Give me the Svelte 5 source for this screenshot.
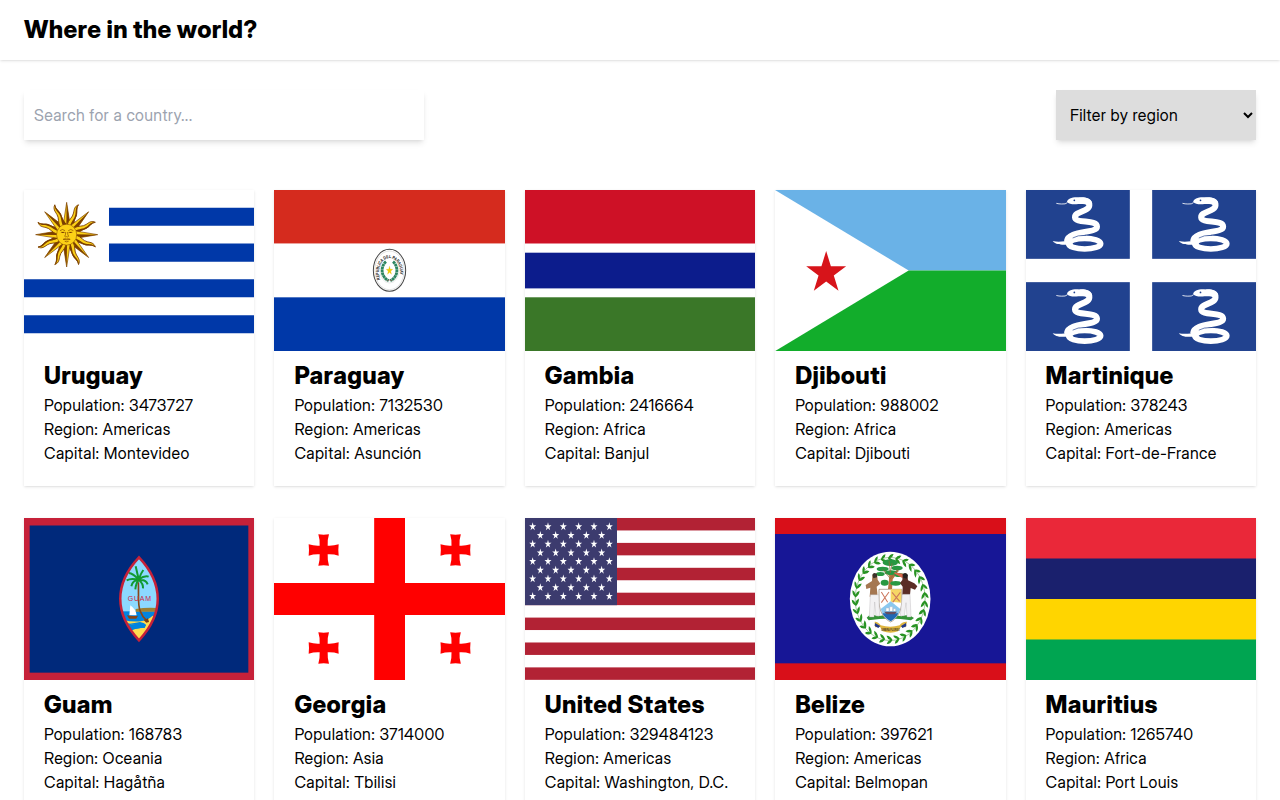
<script>
  const countries = [
    { name: 'Uruguay', population: 3473727, region: 'Americas', capital: 'Montevideo', box: '12 12 691.2 483.84' },
    { name: 'Paraguay', population: 7132530, region: 'Americas', capital: 'Asunción', box: '-228 -135 691.2 483.84' },
    { name: 'Gambia', population: 2416664, region: 'Africa', capital: 'Banjul', box: '0 0 230.4 161.28' },
    { name: 'Djibouti', population: 988002, region: 'Africa', capital: 'Djibouti', box: '15 12 691.2 483.84' },
    { name: 'Martinique', population: 378243, region: 'Americas', capital: 'Fort-de-France', box: '18 12 691.2 483.84' },
    { name: 'Guam', population: 168783, region: 'Oceania', capital: 'Hagåtña', box: '12 12 691.2 483.84' },
    { name: 'Georgia', population: 3714000, region: 'Asia', capital: 'Tbilisi', box: '12 12 691.2 483.84' },
    { name: 'United States', population: 329484123, region: 'Americas', capital: 'Washington, D.C.', box: '15 12 691.2 483.84' },
    { name: 'Belize', population: 397621, region: 'Americas', capital: 'Belmopan', box: '-195 -66 691.2 483.84' },
    { name: 'Mauritius', population: 1265740, region: 'Africa', capital: 'Port Louis', box: '0 0 230.4 161.28' }
  ];

  const regions = ['Africa', 'Americas', 'Asia', 'Europe', 'Oceania'];

  function star(cx, cy, rx, ry = rx) {
    return Array.from({ length: 10 }, (_, i) => {
      const k = i % 2 ? 0.382 : 1;
      const a = (i * Math.PI) / 5;
      return `${(cx + rx * k * Math.sin(a)).toFixed(2)},${(cy - ry * k * Math.cos(a)).toFixed(2)}`;
    }).join(' ');
  }

  const unionStars = [];
  for (let row = 0; row < 9; row++) {
    const n = row % 2 ? 5 : 6;
    for (let i = 0; i < n; i++) {
      unionStars.push(star((row % 2 ? 61 : 38) + i * 46, 38 + row * 26.1, 11, 13));
    }
  }

  const rays = Array.from({ length: 8 }, (_, i) => i * 45);
  const wreath = Array.from({ length: 30 }, (_, i) => i * 12);
</script>

<header>
  <h1>Where in the world?</h1>
</header>

<main>
  <div class="controls">
    <input type="text" placeholder="Search for a country..." />
    <select>
      <option>Filter by region</option>
      {#each regions as region}
        <option>{region}</option>
      {/each}
    </select>
  </div>

  <div class="grid">
    {#each countries as c}
      <article class="card">
        <svg class="flag" viewBox={c.box} preserveAspectRatio="none">
          {#if c.name === 'Uruguay'}
            <rect x="0" y="0" width="720" height="510" fill="#fff" />
            <path fill="#0038a8" d="M267 65.5h450v54h-450zM267 172.5h450v54.500h-450zM0 280h720v54H0zM0 387.500h720v54H0z" />
            <g transform="translate(140 146) scale(.96 1)">
              {#each rays as a}
                <g transform="rotate({a})">
                  <path d="M-11 -28L0 -97L11 -28Z" fill="#fcd116" stroke="#7b3f00" stroke-width="2" />
                  <path d="M-1 -28L0 -97L11 -28Z" fill="#7b3f00" />
                </g>
                <g transform="rotate({a + 22.5})">
                  <path d="M-10 -28C-12 -45 -2 -55 -5 -68C-7 -79 -10 -88 0 -97C-4 -83 6 -75 6 -63C6 -52 4 -44 11 -28Z" fill="#fcd116" stroke="#7b3f00" stroke-width="2.500" />
                  <path d="M0 -28C-2 -45 5 -52 2 -66C0 -77 -7 -84 0 -97C-2 -83 7 -75 7 -63C7 -52 6 -44 12 -28Z" fill="#7b3f00" />
                </g>
              {/each}
              <circle r="31.5" fill="#fcd116" stroke="#7b3f00" stroke-width="1.500" />
              <g fill="none" stroke="#7b3f00" stroke-width="2">
                <path d="M-21 -12Q-13 -19 -5 -12M5 -12Q13 -19 21 -12M-18 -7h12M6 -7h12M-3 -8Q-3 1 -6 5Q-3 8 0 6Q3 8 6 5Q3 1 3 -8M-11 14Q-5 11 0 13Q5 11 11 14Q0 17 -11 14M-6 20Q0 23 6 20" />
              </g>
              <path d="M-15 -8h6v3h-6zM9 -8h6v3h-6z" fill="#7b3f00" />
            </g>
          {:else if c.name === 'Paraguay'}
            <rect x="-230" y="-135" width="700" height="161" fill="#d52b1e" />
            <rect x="-230" y="26" width="700" height="161" fill="#fff" />
            <rect x="-230" y="187" width="700" height="164" fill="#0038a8" />
            <ellipse cx="118.500" cy="106" rx="48.500" ry="63" fill="#fff" stroke="#444" stroke-width="3" />
            <ellipse cx="118.500" cy="106" rx="44" ry="58" fill="none" stroke="#aaa" stroke-width="1" />
            <ellipse cx="118.500" cy="106" rx="29" ry="38" fill="none" stroke="#bbb" stroke-width="1" />
            <path id="seal-ring" d="M91 133A32 42 0 1 1 146 133" fill="none" />
            <text font-family="Liberation Sans" font-weight="700" font-size="13" fill="#111">
              <textPath href="#seal-ring" textLength="146" lengthAdjust="spacingAndGlyphs">REPUBLICA DEL PARAGUAY</textPath>
            </text>
            <path d="M108 80C90 95 93 127 116 137M129 80C147 95 144 127 121 137" fill="none" stroke="#2c8560" stroke-width="8.500" stroke-dasharray="8 1" />
            <path d="M110 137Q118 133 127 137" fill="none" stroke="#8a5e55" stroke-width="2" />
            <polygon points={star(118.5, 107, 10, 13)} fill="#f5d000" stroke="#d5ab00" stroke-width=".8" />
          {:else if c.name === 'Gambia'}
            <rect width="231" height="162" fill="#fff" />
            <rect width="231" height="53.500" fill="#ce1126" />
            <rect y="62.700" width="231" height="35.700" fill="#0c1c8c" />
            <rect y="107.300" width="231" height="54.700" fill="#3a7728" />
          {:else if c.name === 'Djibouti'}
            <rect x="0" y="0" width="720" height="253.500" fill="#6ab2e7" />
            <rect x="0" y="253.500" width="720" height="250" fill="#12ad2b" />
            <path d="M15 12L416 253.500L15 495.500Z" fill="#fff" />
            <polygon points={star(168.5, 261, 63, 66)} fill="#d7141a" />
          {:else if c.name === 'Martinique'}
            <rect x="0" y="0" width="720" height="510" fill="#fff" />
            {#each [[0, 0], [378.5, 0], [0, 276.5], [378.5, 276.5]] as [x, y]}
              <g transform="translate({x} {y})">
                <rect x={x ? 18 : 0} y="12" width={x ? 320 : 329.5} height="206.500" fill="#21428f" />
                <path d="M178 44C200 41 209 46 208 58C207 77 164 76 165 94C166 114 231 99 231 122C231 143 145 132 141 165" fill="none" stroke="#fff" stroke-width="18" />
                <path d="M141 48C142 38 158 32 178 34C193 32 209 36 216 49L205 60C197 53 187 54 175 54C162 56 147 55 141 48Z" fill="#fff" />
                <path d="M142 50Q137 55 125 54Q117 54 109 52" fill="none" stroke="#fff" stroke-width="2.500" />
                <circle cx="163" cy="43" r="2.600" fill="#21428f" />
                <ellipse cx="194" cy="173" rx="48" ry="16" fill="none" stroke="#fff" stroke-width="17" />
                <path d="M98 165C110 168 122 167 133 166C135 153 143 145 155 140L164 151L155 166L160 176Q148 183 138 176C122 176 109 177 98 165Z" fill="#fff" />
                <path d="M158 156Q172 147 198 148" fill="none" stroke="#21428f" stroke-width="2" />
              </g>
            {/each}
          {:else if c.name === 'Guam'}
            <rect x="0" y="0" width="720" height="510" fill="#c62139" />
            <rect x="29" y="34.500" width="656" height="441.500" fill="#00297b" />
            <clipPath id="seal-guam"><path d="M357 130C432 210 432 299 357 379C282 299 282 210 357 130Z" /></clipPath>
            <g clip-path="url(#seal-guam)">
              <rect x="295" y="125" width="125" height="170" fill="#8cd9ff" />
              <rect x="295" y="292" width="125" height="90" fill="#0084e0" />
              <path d="M347 285Q380 279 415 282V293H347Z" fill="#9c8032" />
              <path d="M305 317Q340 325 362 322Q387 317 398 305L420 310V390H320L332 351Q350 340 374 342Q380 332 358 328Q340 333 328 329Z" fill="#ffdc50" />
              <path d="M323 330Q345 327 360 324Q386 330 375 339Q354 344 336 346L325 342Q354 338 350 333Z" fill="#0084e0" />
              <path d="M355 205C357 244 352 273 361 292Q368 310 380 320" fill="none" stroke="#874719" stroke-width="5" />
              <path d="M371 318L384 313L387 324L379 326Z" fill="#7b3c16" />
              <g fill="none" stroke="#119a32" stroke-width="6">
                <path d="M356 196Q350 170 347 157M356 196Q363 177 370 168M355 196Q339 178 326 177M356 196Q374 184 386 188M356 198Q334 191 320 199M356 199Q377 195 383 211M354 199Q338 199 334 217M356 198Q348 207 346 226M357 198Q370 209 369 223" />
              </g>
              <path d="M331 274L328 304H350Q348 286 331 274Z" fill="#fff" />
              <path d="M321 304Q337 308 354 305L349 314H327Z" fill="#894415" />
            </g>
            <text x="323" y="262" font-family="Liberation Sans" font-size="21" textLength="70" lengthAdjust="spacing" fill="#cf2442">GUAM</text>
            <path d="M357 130C432 210 432 299 357 379C282 299 282 210 357 130Z" fill="none" stroke="#c62139" stroke-width="7.500" />
          {:else if c.name === 'Georgia'}
            <rect x="0" y="0" width="720" height="510" fill="#fff" />
            <path d="M312.500 0h92.500v510h-92.500zM0 207h720v96H0z" fill="#f00" />
            {#each [[161, 108], [556.5, 108], [161, 402], [556.5, 402]] as [x, y]}
              <path transform="translate({x} {y})" d="M-16 -47Q0 -45 16 -47Q11 -31 12 -13Q29 -12 45 -17Q43 0 45 17Q29 12 12 13Q11 31 16 47Q0 45 -16 47Q-11 31 -12 13Q-29 12 -45 17Q-43 0 -45 -17Q-29 -12 -12 -13Q-11 -31 -16 -47Z" fill="#f00" />
            {/each}
          {:else if c.name === 'United States'}
            <rect x="0" y="0" width="720" height="510" fill="#fff" />
            {#each [0, 2, 4, 6, 8, 10, 12] as i}
              <rect x="0" y={12 + i * 37.35} width="720" height="37.350" fill="#b22234" />
            {/each}
            <rect x="0" y="0" width="291" height="273.500" fill="#3c3b6e" />
            {#each unionStars as points}
              <polygon {points} fill="#fff" />
            {/each}
          {:else if c.name === 'Belize'}
            <rect x="-200" y="-70" width="720" height="500" fill="#d90f19" />
            <rect x="-200" y="-18" width="720" height="388" fill="#171696" />
            <ellipse cx="150.500" cy="177" rx="121" ry="142" fill="#fff" />
            <ellipse cx="150.500" cy="177" rx="105" ry="125" fill="none" stroke="#4b9b3c" stroke-width="1.500" />
            <g transform="translate(150.500 177) scale(.85 1)">
              {#each wreath as a}
                <path transform="rotate({a}) translate(0 -123)" d="M-8 1Q-1 -13 12 -12Q10 -3 0 0Q9 2 13 13Q1 14 -8 1Z" fill="#289323" />
              {/each}
            </g>
            <path d="M80 233Q88 220 114 229Q150 219 184 229Q207 220 222 234L213 241Q150 230 86 241Z" fill="#359437" />
            <path d="M147 147L151 107L137 93M153 148L156 106L175 91M153 120L165 103" fill="none" stroke="#b57440" stroke-width="6" />
            <g fill="#289842">
              <ellipse cx="151" cy="68" rx="23" ry="10" />
              <ellipse cx="128" cy="87" rx="18" ry="7" />
              <ellipse cx="171" cy="84" rx="17" ry="7" />
              <ellipse cx="121" cy="102" rx="13" ry="6" />
              <ellipse cx="153" cy="98" rx="19" ry="7" />
              <ellipse cx="177" cy="105" rx="14" ry="6" />
              <ellipse cx="134" cy="128" rx="12" ry="9" />
              <ellipse cx="167" cy="130" rx="16" ry="7" />
            </g>
            <path d="M147 62L151 99L156 70M128 88L151 116L173 88" stroke="#91683a" stroke-width="2" fill="none" />
            <path d="M163 97L196 103L187 114L164 101" fill="#db674c" />
            <path d="M117 148H185V187C185 216 168 238 152 246C132 237 119 216 117 188Z" fill="#fff" stroke="#907b68" stroke-width="2" />
            <path d="M152 148H184V188L152 185Z" fill="#f6d665" />
            <path d="M152 184L122 207Q130 232 152 244Q173 232 181 207Z" fill="#8bc8ef" />
            <path d="M127 220H175Q168 235 152 244Q135 235 127 220Z" fill="#2168b4" />
            <path d="M132 215H171L164 223H140Z" fill="#664d60" />
            <path d="M138 213V204H147V213M149 213V200H158V213M160 213V206H167V213" fill="#fff" stroke="#aab9cc" stroke-width="1.500" />
            <path d="M124 156L143 187M147 156L124 188M156 157L179 184M181 157L158 187" stroke="#cb765d" stroke-width="3" />
            <g>
              <path d="M97 106L111 103L113 119L121 131L110 140L112 158L112 170H89L91 143L79 147L77 135L96 123Z" fill="#a57751" />
              <path d="M97 104Q101 95 111 102V112L100 115Z" fill="#3d3028" />
              <path d="M91 164H116L119 228H108L104 186L102 231H88Z" fill="#f2f1f3" stroke="#aaa6a9" />
              <path d="M188 103L202 105L204 121L223 130L232 139L225 149L212 144L210 165H187L188 140L180 129L187 120Z" fill="#5b2d26" />
              <path d="M188 102Q198 95 204 105L201 116L190 113Z" fill="#28201f" />
              <path d="M187 163H210L213 231H201L198 188L193 227H181Z" fill="#f2f1f3" stroke="#aaa6a9" />
            </g>
            <path d="M104 245Q114 244 122 256Q151 264 179 256Q186 244 201 245L197 262L183 260L174 274Q152 282 128 274L120 260L105 262Z" fill="#dfb640" />
            <path d="M105 249L121 258L115 264L104 258ZM198 249L183 258L187 264L199 259Z" fill="#253988" />
            <text x="124" y="272" font-family="Liberation Sans" font-size="10" font-weight="700" textLength="55" lengthAdjust="spacingAndGlyphs" fill="#493925">UMBRA FLOREO</text>
          {:else}
            <rect width="231" height="41" fill="#ea2839" />
            <rect y="40.500" width="231" height="41" fill="#1a206d" />
            <rect y="81" width="231" height="41" fill="#ffd500" />
            <rect y="121.500" width="231" height="41" fill="#00a551" />
          {/if}
        </svg>
        <div class="info">
          <h2>{c.name}</h2>
          <p>Population: {c.population}</p>
          <p>Region: {c.region}</p>
          <p>Capital: {c.capital}</p>
        </div>
      </article>
    {/each}
  </div>
</main>

<style>
  :global(body) {
    margin: 0;
    background: #fff;
    color: #000;
    font-family: "Inter Display", Inter, sans-serif;
    font-size: 16px;
    line-height: 24px;
    letter-spacing: 0.35px;
    overflow: hidden;
  }

  header {
    display: flex;
    align-items: center;
    box-sizing: border-box;
    height: 60px;
    padding: 0 24px;
    box-shadow: 0 1px 3px rgba(0, 0, 0, 0.1), 0 1px 2px -1px rgba(0, 0, 0, 0.1);
  }

  h1,
  h2,
  p {
    margin: 0;
  }

  h1,
  h2 {
    font-size: 24px;
    line-height: 32px;
    font-weight: 800;
  }

  main {
    height: 740px;
    overflow: hidden;
    box-sizing: border-box;
    padding: 30px 24px 0;
  }

  .controls {
    display: flex;
    justify-content: space-between;
    margin-bottom: 50px;
  }

  input,
  select {
    box-sizing: border-box;
    height: 50px;
    padding: 10px;
    border: 0;
    border-radius: 0;
    font: inherit;
    letter-spacing: inherit;
    color: #000;
    box-shadow: 0 4px 6px -1px rgba(0, 0, 0, 0.1), 0 2px 4px -2px rgba(0, 0, 0, 0.1);
  }

  input {
    width: 400px;
    background: #fff;
  }

  input::placeholder {
    color: #9ca3af;
  }

  select {
    width: 200px;
    background: #ddd;
  }

  .grid {
    display: grid;
    grid-template-columns: repeat(5, 1fr);
    gap: 32px 20px;
  }

  .card {
    box-shadow: 0 1px 3px rgba(0, 0, 0, 0.1), 0 1px 2px -1px rgba(0, 0, 0, 0.1);
  }

  .flag {
    display: block;
    width: 100%;
    height: 161.28px;
  }

  .flag text {
    letter-spacing: 0;
  }

  .info {
    box-sizing: border-box;
    height: 135px;
    padding: 9px 20px 0;
  }

  h2 {
    margin-bottom: 1px;
  }

  .info p {
    white-space: nowrap;
  }
</style>
